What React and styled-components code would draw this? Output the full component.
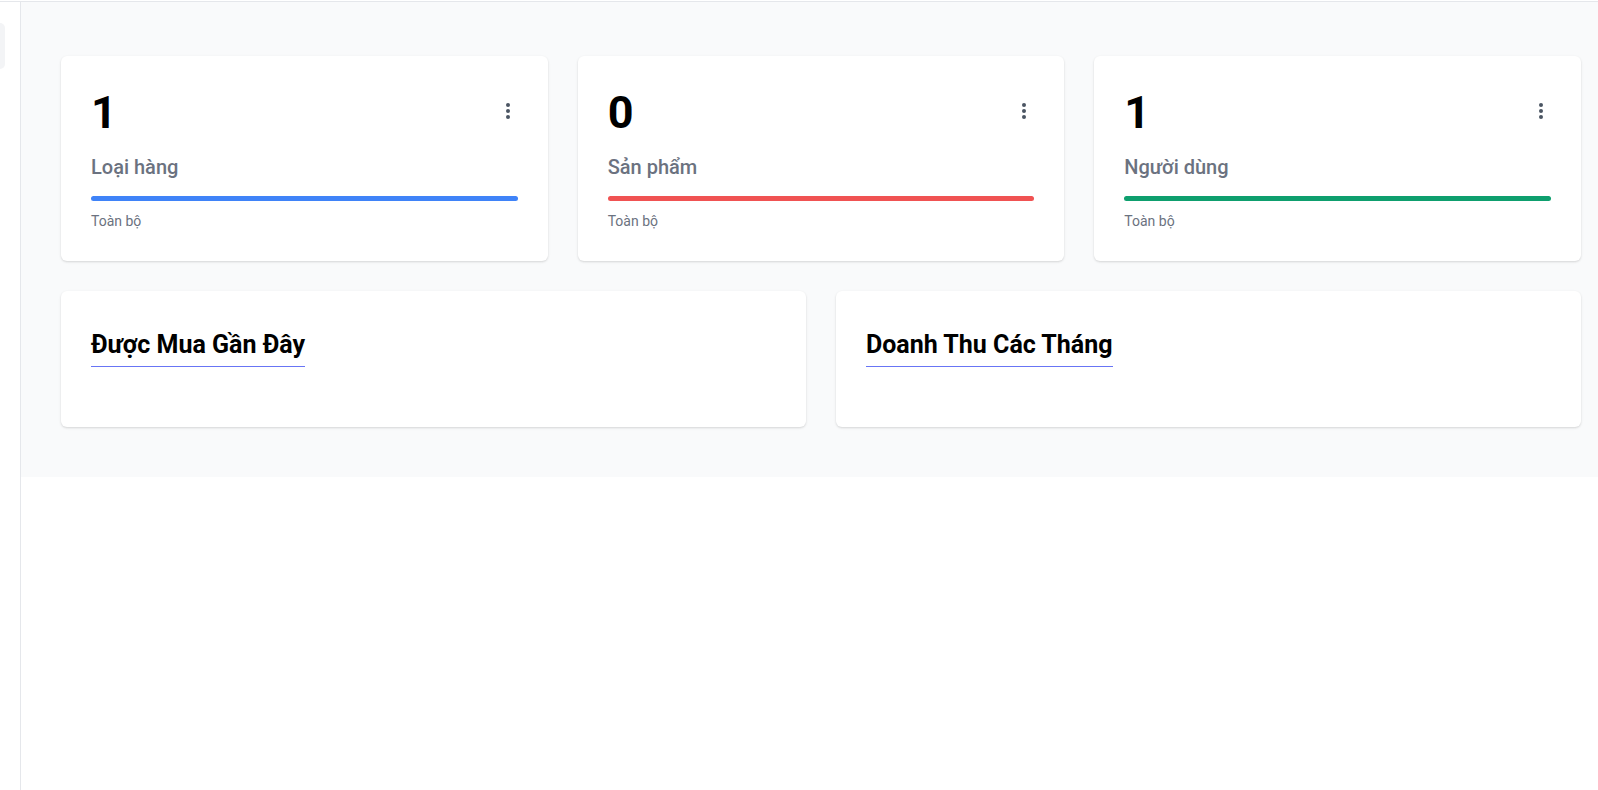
import styled, { createGlobalStyle } from "styled-components";

const GlobalStyle = createGlobalStyle`
  * {
    box-sizing: border-box;
  }

  body {
    margin: 0;
    background: #fff;
    font-family: Roboto, "Liberation Sans", Arial, sans-serif;
    color: #111827;
  }
`;

const Layout = styled.div`
  display: flex;
  min-height: 790px;
  border-top: 1px solid #e5e7eb;
  margin-top: 1px;
`;

const Sidebar = styled.aside`
  width: 21px;
  flex-shrink: 0;
  border-right: 1px solid #e5e7eb;
  padding-top: 21px;
  overflow: hidden;
`;

const NavItem = styled.div`
  width: 5px;
  height: 46px;
  background: #f3f4f6;
  border-radius: 0 6px 6px 0;
`;

const Main = styled.main`
  flex: 1;
  min-width: 0;
  align-self: flex-start;
  background: #f9fafb;
  padding: 54px 17px 50px 40px;
`;

const StatGrid = styled.div`
  display: grid;
  grid-template-columns: repeat(3, 1fr);
  gap: 30px;
`;

const PanelGrid = styled.div`
  display: grid;
  grid-template-columns: repeat(2, 1fr);
  gap: 30px;
  margin-top: 30px;
`;

const Card = styled.section`
  background: #fff;
  border-radius: 6px;
  box-shadow: 0 1px 3px rgba(0, 0, 0, 0.1), 0 1px 2px rgba(0, 0, 0, 0.06);
`;

const StatCard = styled(Card)`
  padding: 30px 30px 29px;
`;

const StatHead = styled.div`
  display: flex;
  justify-content: space-between;
  align-items: flex-start;
`;

const Count = styled.div`
  font-size: 45px;
  font-weight: 700;
  line-height: 1.2;
  color: #000;
`;

const MenuButton = styled.button`
  border: 0;
  background: none;
  padding: 0;
  margin: 13px -2px 0 0;
  width: 24px;
  height: 24px;
  color: #4b5563;
  cursor: pointer;
  display: flex;
`;

const Label = styled.div`
  margin-top: 12px;
  font-size: 20px;
  font-weight: 500;
  line-height: 1.5;
  color: #6b7280;
`;

const Bar = styled.div`
  margin-top: 14px;
  height: 5px;
  border-radius: 3px;
  background: ${(p) => p.$color};
`;

const Caption = styled.div`
  margin-top: 10px;
  font-size: 14px;
  line-height: 1.5;
  color: #6b7280;
`;

const Panel = styled(Card)`
  padding: 35px 30px 60px;
`;

const PanelTitle = styled.h2`
  display: inline-block;
  margin: 0;
  padding-bottom: 2px;
  font-size: 25px;
  font-weight: 700;
  line-height: 1.5;
  color: #000;
  border-bottom: 1px solid #6875f5;
`;

function DotsIcon() {
  return (
    <svg viewBox="0 0 24 24" width="24" height="24" fill="currentColor">
      <circle cx="12" cy="6" r="2" />
      <circle cx="12" cy="12" r="2" />
      <circle cx="12" cy="18" r="2" />
    </svg>
  );
}

const stats = [
  { count: 1, label: "Loại hàng", color: "#3f83f8" },
  { count: 0, label: "Sản phẩm", color: "#f05252" },
  { count: 1, label: "Người dùng", color: "#0e9f6e" },
];

export default function App() {
  return (
    <>
      <GlobalStyle />
      <Layout>
        <Sidebar>
          <NavItem />
        </Sidebar>
        <Main>
          <StatGrid>
            {stats.map((s) => (
              <StatCard key={s.label}>
                <StatHead>
                  <Count>{s.count}</Count>
                  <MenuButton aria-label="Tùy chọn">
                    <DotsIcon />
                  </MenuButton>
                </StatHead>
                <Label>{s.label}</Label>
                <Bar $color={s.color} />
                <Caption>Toàn bộ</Caption>
              </StatCard>
            ))}
          </StatGrid>
          <PanelGrid>
            <Panel>
              <PanelTitle>Được Mua Gần Đây</PanelTitle>
            </Panel>
            <Panel>
              <PanelTitle>Doanh Thu Các Tháng</PanelTitle>
            </Panel>
          </PanelGrid>
        </Main>
      </Layout>
    </>
  );
}
